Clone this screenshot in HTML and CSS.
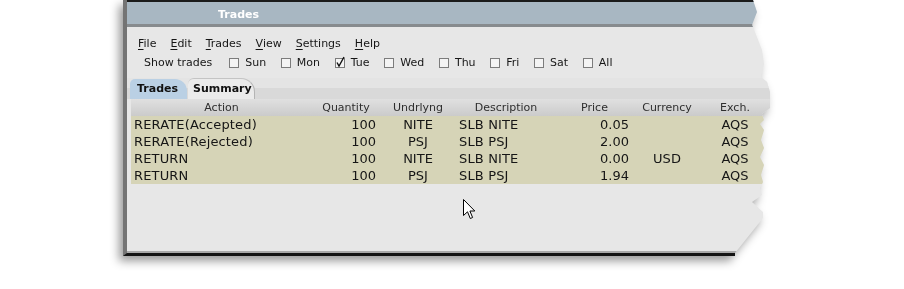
FILE: index.html
```html
<!DOCTYPE html>
<html lang="en">
<head>
    <meta charset="UTF-8">
    <meta name="viewport" content="width=device-width, initial-scale=1.0">
    <title>Trades</title>
    <link rel="stylesheet" href="styles.css">
</head>
<body>
    <div class="frame">
        <div class="window">
            <div class="titlebar"><span class="title">Trades</span></div>

            <div class="menubar">
                <span><u>F</u>ile</span>
                <span><u>E</u>dit</span>
                <span><u>T</u>rades</span>
                <span><u>V</u>iew</span>
                <span><u>S</u>ettings</span>
                <span><u>H</u>elp</span>
            </div>

            <div class="filterbar">
                <span class="label">Show trades</span>
                <label class="day"><span class="box"></span>Sun</label>
                <label class="day"><span class="box"></span>Mon</label>
                <label class="day"><span class="box checked"><svg viewBox="0 0 10 10" width="10" height="10"><polyline points="2,4.5 4,8 9,-1" fill="none" stroke="#111" stroke-width="1.4"/></svg></span>Tue</label>
                <label class="day"><span class="box"></span>Wed</label>
                <label class="day"><span class="box"></span>Thu</label>
                <label class="day"><span class="box"></span>Fri</label>
                <label class="day"><span class="box"></span>Sat</label>
                <label class="day"><span class="box"></span>All</label>
            </div>

            <div class="tabs">
                <div class="tab active">Trades</div>
                <div class="tab">Summary</div>
            </div>

            <div class="pane">
                <div class="row head">
                    <div>Action</div>
                    <div>Quantity</div>
                    <div>Undrlyng</div>
                    <div>Description</div>
                    <div>Price</div>
                    <div>Currency</div>
                    <div>Exch.</div>
                </div>
                <div class="row">
                    <div class="left">RERATE(Accepted)</div>
                    <div class="right">100</div>
                    <div>NITE</div>
                    <div class="left">SLB NITE</div>
                    <div class="right">0.05</div>
                    <div></div>
                    <div>AQS</div>
                </div>
                <div class="row">
                    <div class="left">RERATE(Rejected)</div>
                    <div class="right">100</div>
                    <div>PSJ</div>
                    <div class="left">SLB PSJ</div>
                    <div class="right">2.00</div>
                    <div></div>
                    <div>AQS</div>
                </div>
                <div class="row">
                    <div class="left">RETURN</div>
                    <div class="right">100</div>
                    <div>NITE</div>
                    <div class="left">SLB NITE</div>
                    <div class="right">0.00</div>
                    <div>USD</div>
                    <div>AQS</div>
                </div>
                <div class="row">
                    <div class="left">RETURN</div>
                    <div class="right">100</div>
                    <div>PSJ</div>
                    <div class="left">SLB PSJ</div>
                    <div class="right">1.94</div>
                    <div></div>
                    <div>AQS</div>
                </div>
            </div>
        </div>
    </div>

    <svg class="cursor" width="13" height="21" viewBox="0 0 13 21">
        <path d="M0.5 0.5 L0.5 16.5 L4.5 12.8 L7.3 19.5 L9.6 18.5 L6.9 12 L11.8 12 Z" fill="#fff" stroke="#000" stroke-width="1" stroke-linejoin="miter"/>
    </svg>
</body>
</html>
```

FILE: styles.css
```css
body {
    margin: 0;
    height: 289px;
    overflow: hidden;
    position: relative;
    background: #fff;
    font-family: "DejaVu Sans", sans-serif;
    color: #161616;
}

.frame {
    margin-left: 123px;
    width: 652px;
    filter: drop-shadow(-4px 5px 5px rgba(0, 0, 0, 0.4));
}

.window {
    height: 256px;
    box-sizing: border-box;
    display: flex;
    flex-direction: column;
    background: #e7e7e7;
    border-left: 4px solid #747474;
    border-bottom: 3px solid #141414;
    clip-path: polygon(0 0, 630px 0, 634px 12px, 629px 25px, 632px 32px, 639px 50px, 641px 64px, 638px 77px,
        644px 82px, 647px 92px, 647px 108px, 639px 114px, 641px 120px, 637px 124px, 641px 130px, 638px 140px,
        641px 148px, 637px 157px, 641px 165px, 638px 175px, 640px 182px, 637px 188px, 639px 195px,
        629px 202px, 640px 212px, 640px 218px, 612px 253px, 612px 256px, 0 256px);
}

.titlebar {
    height: 22px;
    background: #a8b7c2;
    border-top: 2px solid #1b1b1b;
    border-bottom: 3px solid #878b8e;
}

.title {
    display: block;
    padding: 3px 0 0 91px;
    line-height: 19px;
    font-size: 11px;
    font-weight: bold;
    color: #fff;
}

.menubar {
    display: flex;
    gap: 14px;
    padding: 10px 0 0 11px;
    line-height: 14px;
    font-size: 11px;
}

.menubar u {
    text-decoration-thickness: 1px;
    text-underline-offset: 2px;
}

.filterbar {
    display: flex;
    align-items: center;
    padding: 5px 0 0 17px;
    line-height: 14px;
    font-size: 11px;
}

.filterbar .label {
    margin-right: 17px;
}

.day {
    display: flex;
    align-items: center;
    margin-right: 14.7px;
}

.box {
    width: 10px;
    height: 10px;
    box-sizing: border-box;
    margin-right: 6px;
    border: 1px solid #7c7c7c;
    background: #f4f4f4;
    position: relative;
}

.box svg {
    position: absolute;
    left: -1px;
    top: -1px;
    overflow: visible;
}

.tabs {
    display: flex;
    height: 21px;
    margin-top: 8px;
    padding-left: 3px;
    background: linear-gradient(#e4e4e4 0, #e4e4e4 10px, #d9d9d9 10px, #d9d9d9 100%);
}

.tab {
    font-size: 11px;
    font-weight: bold;
    line-height: 20px;
    color: #111;
}

.tab.active {
    width: 57px;
    box-sizing: border-box;
    padding-left: 7px;
    margin-top: 1px;
    background: #bad0e4;
    border-radius: 5px 12px 0 0;
}

.tab:not(.active) {
    width: 67px;
    box-sizing: border-box;
    padding-left: 5px;
    margin-left: 1px;
    background: #ebebeb;
    border-top: 1px solid #c4c4c4;
    border-right: 1px solid #b4b4b4;
    border-radius: 6px 14px 0 0;
    line-height: 19px;
}

.pane {
    flex: 1;
    padding-left: 4px;
    border-bottom: 2px solid #a9a9a9;
}

.row {
    display: grid;
    grid-template-columns: 181px 68px 76px 100px 77px 68px 68px;
    height: 17px;
    line-height: 17px;
    font-size: 13px;
    background: #d6d4b7;
    white-space: nowrap;
}

.row > div {
    text-align: center;
}

.row .left {
    text-align: left;
    padding-left: 3px;
    letter-spacing: 0.15px;
}

.row .right {
    text-align: right;
    padding-right: 4px;
}

.row.head {
    font-size: 11px;
    color: #2e2e2e;
    background: linear-gradient(#e0e0e0, #cbcbcb);
}

.row.head > div {
    text-align: center;
    padding: 0;
}

.cursor {
    position: absolute;
    left: 463px;
    top: 199px;
}
```
